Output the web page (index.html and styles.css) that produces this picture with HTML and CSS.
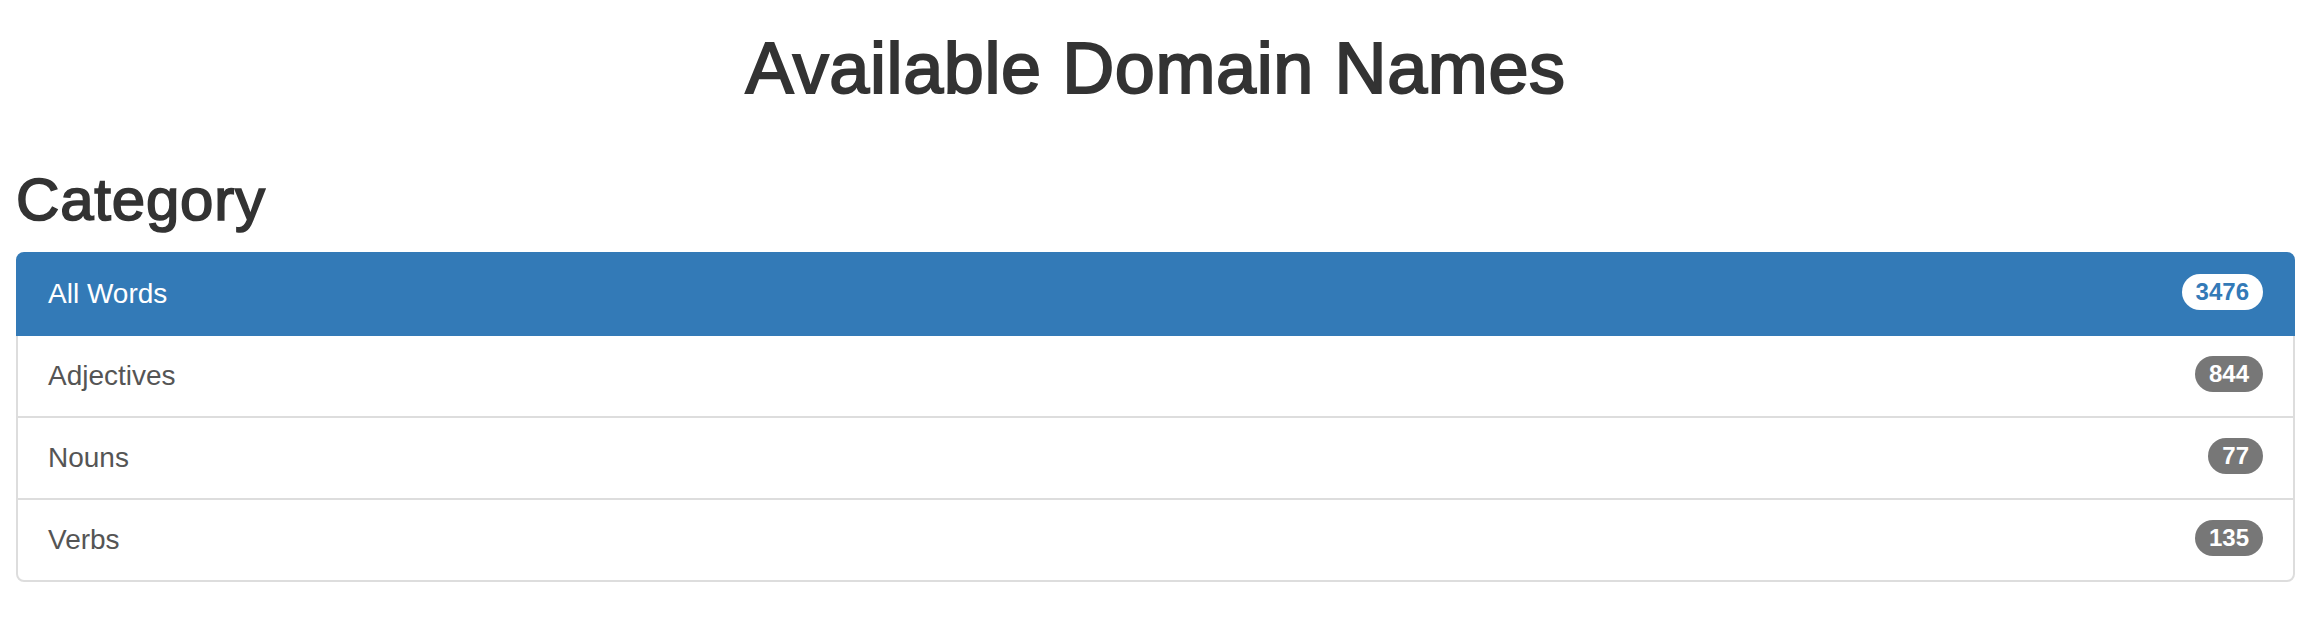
FILE: index.html
```html
<!DOCTYPE html>
<html lang="en">
<head>
<meta charset="utf-8">
<title>Available Domain Names</title>
<link rel="stylesheet" href="styles.css">
</head>
<body>
<div class="container">
  <h1 class="page-title">Available Domain Names</h1>
  <h2 class="section-title">Category</h2>
  <div class="list-group">
    <a class="list-item active" href="#"><span class="label">All Words</span><span class="badge">3476</span></a>
    <a class="list-item" href="#"><span class="label">Adjectives</span><span class="badge">844</span></a>
    <a class="list-item" href="#"><span class="label">Nouns</span><span class="badge">77</span></a>
    <a class="list-item" href="#"><span class="label">Verbs</span><span class="badge">135</span></a>
  </div>
</div>
</body>
</html>
```
FILE: styles.css
```css
* { box-sizing: border-box; }
html, body {
  margin: 0;
  padding: 0;
  background: #fff;
}
body {
  font-family: "Liberation Sans", Arial, Helvetica, sans-serif;
  color: #333;
  font-size: 28px;
  line-height: 40px;
}
.container {
  padding: 0 10px 0 16px;
}
.page-title {
  margin: 29px 0 0;
  font-size: 72px;
  line-height: 79px;
  font-weight: 500;
  letter-spacing: 0.6px;
  -webkit-text-stroke: 2px #333;
  text-align: center;
  color: #333;
}
.section-title {
  margin: 59px 0 19px;
  font-size: 60px;
  line-height: 66px;
  font-weight: 500;
  letter-spacing: 0.8px;
  -webkit-text-stroke: 1.7px #333;
  color: #333;
}
.list-group {
  display: flex;
  flex-direction: column;
}
.list-item {
  position: relative;
  display: flex;
  justify-content: space-between;
  align-items: flex-start;
  padding: 20px 30px;
  margin-bottom: -2px;
  border: 2px solid #ddd;
  background: #fff;
  color: #555;
  text-decoration: none;
  font-size: 28px;
  line-height: 40px;
}
.list-item:first-child {
  border-top-left-radius: 8px;
  border-top-right-radius: 8px;
}
.list-item:last-child {
  margin-bottom: 0;
  border-bottom-left-radius: 8px;
  border-bottom-right-radius: 8px;
}
.list-item.active {
  z-index: 2;
  background: #337ab7;
  border-color: #337ab7;
  color: #fff;
}
.badge {
  display: inline-block;
  min-width: 20px;
  padding: 6px 14px;
  font-size: 24px;
  font-weight: bold;
  line-height: 24px;
  color: #fff;
  text-align: center;
  white-space: nowrap;
  background: #777;
  border-radius: 20px;
}
.list-item.active .badge {
  background: #fff;
  color: #337ab7;
}
```
